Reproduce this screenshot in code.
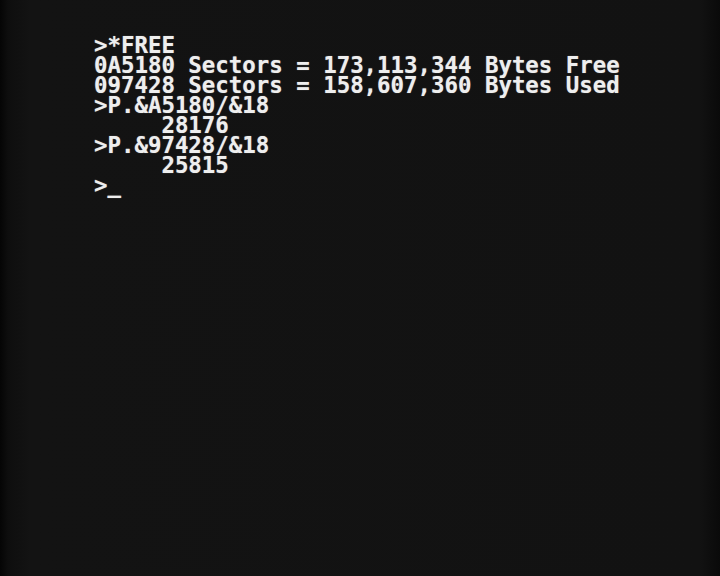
import React from "react";

const lines = [
  ">*FREE",
  "0A5180 Sectors = 173,113,344 Bytes Free",
  "097428 Sectors = 158,607,360 Bytes Used",
  ">P.&A5180/&18",
  "     28176",
  ">P.&97428/&18",
  "     25815",
  ">_",
];

export default function App() {
  return (
    <div className="w-[720px] h-[576px] bg-[#121212] bg-[linear-gradient(90deg,#050505_0px,#0e0e0e_8px,#131313_30px,#121212_700px,#0a0a0a_720px)] overflow-hidden">
      <div
        className="pt-[35px] pl-[94px] text-[#eeeeee] text-[22.4px] leading-[20px] font-bold whitespace-pre [text-shadow:0_0_1px_rgba(255,255,255,0.5)]"
        style={{ fontFamily: '"DejaVu Sans Mono", "Liberation Mono", monospace' }}
      >
        {lines.map((l, i) => (
          <div key={i}>{l}</div>
        ))}
      </div>
    </div>
  );
}
